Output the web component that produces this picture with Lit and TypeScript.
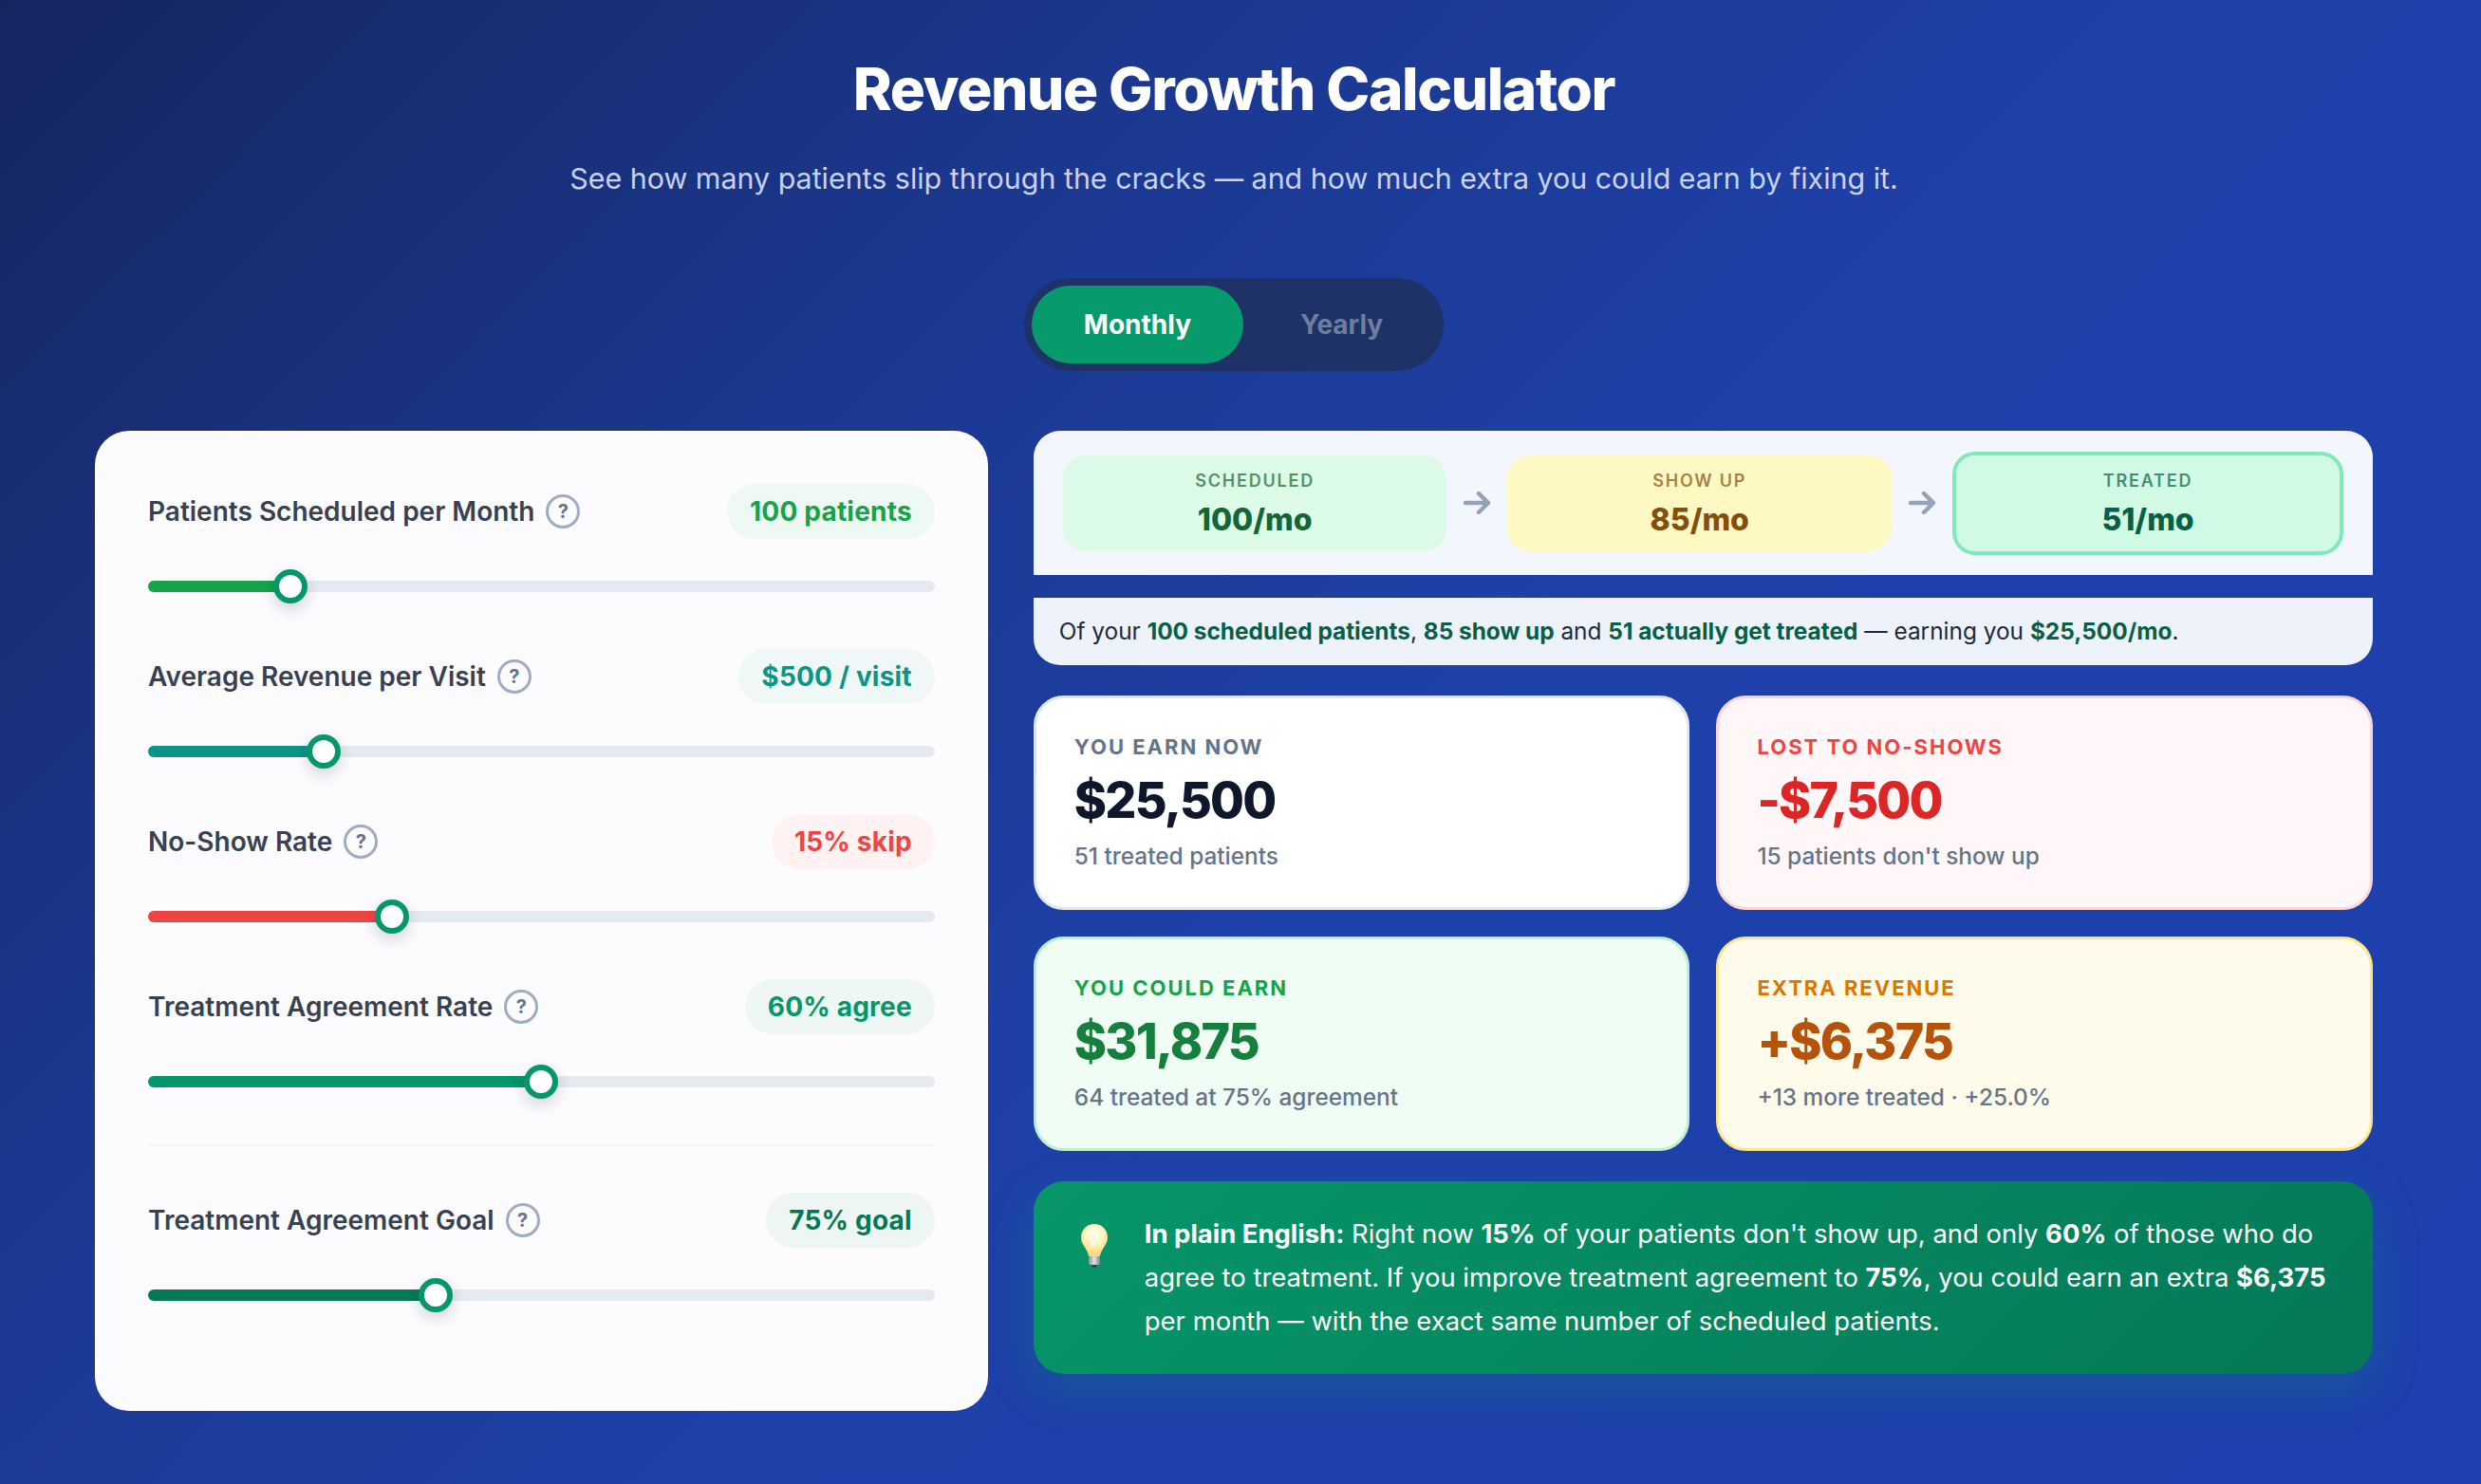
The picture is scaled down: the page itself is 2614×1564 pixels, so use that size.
import { LitElement, css, html } from "lit";
import { customElement } from "lit/decorators.js";

type Slider = {
  label: string;
  value: string;
  thumb: number; // thumb centre as a share of the track
  tone: string;
  divider?: boolean;
};

const SLIDERS: Slider[] = [
  { label: "Patients Scheduled per Month", value: "100 patients", thumb: 18.1, tone: "green" },
  { label: "Average Revenue per Visit", value: "$500 / visit", thumb: 22.3, tone: "teal" },
  { label: "No-Show Rate", value: "15% skip", thumb: 31, tone: "red" },
  { label: "Treatment Agreement Rate", value: "60% agree", thumb: 50, tone: "emerald", divider: true },
  { label: "Treatment Agreement Goal", value: "75% goal", thumb: 36.6, tone: "deep" },
];

@customElement("app-root")
export class AppRoot extends LitElement {
  static styles = css`
    :host {
      display: block;
      min-height: 1564px;
      box-sizing: border-box;
      padding: 0 114px 0 100px;
      background: linear-gradient(135deg, #162560 0%, #1b388e 30%, #1e40a9 55%, #1e40af 100%);
      font-family: Inter, "Liberation Sans", sans-serif;
    }
    .header {
      padding-top: 56px;
      text-align: center;
    }
    h1 {
      margin: 0;
      font-size: 62px;
      line-height: 76px;
      font-weight: 800;
      letter-spacing: -1.4px;
      color: #fff;
    }
    .subtitle {
      margin: 37px 0 0;
      font-size: 30.4px;
      line-height: 38px;
      color: #c7d2ee;
    }
    .toggle-wrap {
      display: flex;
      justify-content: center;
      margin-top: 86px;
    }
    .toggle {
      display: flex;
      gap: 4px;
      padding: 8px;
      border-radius: 49px;
      background: #1e3268;
    }
    .toggle span {
      padding: 0 56px;
      font-size: 28px;
      line-height: 82px;
      font-weight: 700;
      border-radius: 41px;
      color: #6f7e9c;
    }
    .toggle .on {
      padding: 0 55px;
      background: #079a6c;
      color: #fff;
    }
    .grid {
      display: grid;
      grid-template-columns: 2fr 3fr;
      gap: 48px;
      align-items: start;
      margin-top: 63px;
    }

    .controls {
      padding: 56px 56px 56px;
      border-radius: 36px;
      background: #fcfcff;
    }
    .row {
      margin-bottom: 60px;
    }
    .row-head {
      display: flex;
      align-items: center;
      justify-content: space-between;
    }
    .label {
      display: flex;
      align-items: center;
      gap: 12px;
      font-size: 28px;
      font-weight: 600;
      color: #374151;
    }
    .help {
      display: flex;
      align-items: center;
      justify-content: center;
      box-sizing: border-box;
      width: 36px;
      height: 36px;
      border: 3px solid #a0abc4;
      border-radius: 50%;
      font-size: 20px;
      font-weight: 700;
      color: #64748b;
    }
    .pill {
      padding: 0 24px;
      border-radius: 29px;
      font-size: 28px;
      line-height: 58px;
      font-weight: 700;
      letter-spacing: 0.2px;
    }
    .track {
      position: relative;
      height: 12px;
      margin-top: 44px;
      border-radius: 6px;
      background: #e5e9f0;
    }
    .fill {
      height: 100%;
      border-radius: 6px;
    }
    .thumb {
      position: absolute;
      top: 50%;
      box-sizing: border-box;
      width: 36px;
      height: 36px;
      margin: -18px 0 0 -18px;
      border: 6px solid #059669;
      border-radius: 50%;
      background: #fff;
      box-shadow: 0 6px 16px rgba(15, 23, 42, 0.18);
    }
    .divider {
      height: 2px;
      margin-bottom: 49px;
      background: #f1f5f9;
    }
    .green .pill { background: #eff9f3; color: #16a34a; }
    .green .fill { background: #16a34a; }
    .teal .pill { background: #eff8f6; color: #0d9488; }
    .teal .fill { background: #0d9488; }
    .red .pill { background: #fef2f2; color: #ef4444; }
    .red .fill { background: #ef4444; }
    .emerald .pill { background: #eef7f3; color: #059669; }
    .emerald .fill { background: #059669; }
    .deep .pill { background: #edf6f2; color: #047857; }
    .deep .fill { background: #047857; }

    .results {
      display: flex;
      flex-direction: column;
      gap: 32px;
    }
    .funnel {
      display: flex;
      flex-direction: column;
      gap: 24px;
    }
    .flow {
      display: flex;
      align-items: center;
      padding: 21.5px 31px;
      border-radius: 28px 28px 0 0;
      background: #f4f6fe;
    }
    .step {
      flex: 1;
      padding: 13px 8px 0;
      height: 101px;
      box-sizing: border-box;
      border-radius: 24px;
      text-align: center;
    }
    .step .name {
      font-size: 18px;
      line-height: 28px;
      font-weight: 600;
      letter-spacing: 1.8px;
      opacity: 0.7;
    }
    .step .count {
      margin-top: 7px;
      font-size: 32px;
      line-height: 40px;
      font-weight: 800;
    }
    .step.scheduled { background: #dcfce7; color: #166534; }
    .step.show { background: #fef9c3; color: #854d0e; }
    .step.treated {
      flex: none;
      width: 412px;
      height: 109px;
      padding-top: 13px;
      border: 4px solid #80e8bb;
      background: #d1fae5;
      color: #065f46;
    }
    .arrow {
      flex: none;
      display: block;
      width: 64px;
      height: 24px;
    }
    .caption {
      padding: 20px 27px;
      border-radius: 0 0 28px 28px;
      background: #eef2fb;
      font-size: 24.4px;
      line-height: 31px;
      color: #1e293b;
    }
    .caption strong {
      font-weight: 700;
      color: #065f46;
    }

    .cards {
      display: grid;
      grid-template-columns: 1fr 1fr;
      gap: 28px;
    }
    .card {
      box-sizing: border-box;
      height: 226px;
      padding: 37px 40px 0;
      border: 3px solid #e2e8f0;
      border-radius: 32px;
      background: #fff;
    }
    .card .title {
      font-size: 22px;
      line-height: 28px;
      font-weight: 700;
      letter-spacing: 2px;
      color: #64748b;
    }
    .card .amount {
      margin-top: 11px;
      font-size: 52px;
      line-height: 64px;
      font-weight: 800;
      letter-spacing: -1.8px;
      color: #0f172a;
    }
    .card .note {
      margin-top: 11px;
      font-size: 24.4px;
      line-height: 30px;
      font-weight: 500;
      color: #64748b;
    }
    .card.lost { border-color: #fcd5da; background: #fff7f7; }
    .card.lost .title { color: #ef4444; }
    .card.lost .amount { color: #dc2626; }
    .card.could { border-color: #bbf0d2; background: #f0fdf4; }
    .card.could .title { color: #16a34a; }
    .card.could .amount { color: #15803d; }
    .card.extra { border-color: #fde68a; background: #fffbeb; }
    .card.extra .title { color: #d97706; }
    .card.extra .amount { color: #b45309; }

    .insight {
      display: flex;
      align-items: flex-start;
      gap: 39px;
      padding: 32px 30px 33px 50px;
      border-radius: 32px;
      background: linear-gradient(135deg, #079669 0%, #047857 100%);
      box-shadow: 0 16px 48px rgba(5, 150, 105, 0.3);
      font-size: 27.45px;
      line-height: 46px;
      font-weight: 400;
      color: #fff;
    }
    .insight strong {
      font-weight: 700;
    }
    .bulb {
      flex: none;
      width: 28px;
      height: 46px;
      margin-top: 13px;
    }
  `;

  private renderSlider(s: Slider) {
    return html`
      <div class="row ${s.tone}">
        <div class="row-head">
          <div class="label">${s.label}<span class="help">?</span></div>
          <div class="pill">${s.value}</div>
        </div>
        <div class="track">
          <div class="fill" style="width:${s.thumb}%"></div>
          <div class="thumb" style="left:${s.thumb}%"></div>
        </div>
      </div>
      ${s.divider ? html`<div class="divider"></div>` : ""}
    `;
  }

  private renderArrow() {
    return html`<svg class="arrow" viewBox="0 0 64 24" fill="none" stroke="#94a3b8" stroke-width="4.5" stroke-linecap="round" stroke-linejoin="round">
      <path d="M20 12H44M34 2L44 12L34 22" />
    </svg>`;
  }

  private renderBulb() {
    return html`<svg class="bulb" viewBox="0 0 28 46">
      <defs>
        <radialGradient id="glass" cx="50%" cy="32%" r="62%">
          <stop offset="0" stop-color="#fffdf2" />
          <stop offset="0.5" stop-color="#fff6c9" />
          <stop offset="1" stop-color="#f6d97a" />
        </radialGradient>
        <linearGradient id="base" x1="0" x2="1" y1="0" y2="0">
          <stop offset="0" stop-color="#8d939a" />
          <stop offset="0.5" stop-color="#dfe3e6" />
          <stop offset="1" stop-color="#7f858c" />
        </linearGradient>
      </defs>
      <path fill="url(#glass)" d="M14 0C6 0 0 6.200 0 14C0 20.500 4.200 24 6.500 29C7.600 31.400 8 33 8 34H20C20 33 20.400 31.400 21.500 29C23.800 24 28 20.500 28 14C28 6.200 22 0 14 0Z" />
      <rect fill="url(#base)" x="8" y="34" width="12" height="9" rx="2" />
      <path fill="#3c4147" d="M11 43H17L15.500 46H12.500Z" />
    </svg>`;
  }

  override render() {
    return html`
      <div class="header">
        <h1>Revenue Growth Calculator</h1>
        <p class="subtitle">See how many patients slip through the cracks — and how much extra you could earn by fixing it.</p>
      </div>
      <div class="toggle-wrap">
        <div class="toggle"><span class="on">Monthly</span><span>Yearly</span></div>
      </div>
      <div class="grid">
        <section class="controls">${SLIDERS.map((s) => this.renderSlider(s))}</section>
        <section class="results">
          <div class="funnel">
            <div class="flow">
              <div class="step scheduled"><div class="name">SCHEDULED</div><div class="count">100/mo</div></div>
              ${this.renderArrow()}
              <div class="step show"><div class="name">SHOW UP</div><div class="count">85/mo</div></div>
              ${this.renderArrow()}
              <div class="step treated"><div class="name">TREATED</div><div class="count">51/mo</div></div>
            </div>
            <div class="caption">
              Of your <strong>100 scheduled patients</strong>, <strong>85 show up</strong> and
              <strong>51 actually get treated</strong> — earning you <strong>$25,500/mo</strong>.
            </div>
          </div>
          <div class="cards">
            <div class="card">
              <div class="title">YOU EARN NOW</div>
              <div class="amount">$25,500</div>
              <div class="note">51 treated patients</div>
            </div>
            <div class="card lost">
              <div class="title">LOST TO NO-SHOWS</div>
              <div class="amount">-$7,500</div>
              <div class="note">15 patients don't show up</div>
            </div>
            <div class="card could">
              <div class="title">YOU COULD EARN</div>
              <div class="amount">$31,875</div>
              <div class="note">64 treated at 75% agreement</div>
            </div>
            <div class="card extra">
              <div class="title">EXTRA REVENUE</div>
              <div class="amount">+$6,375</div>
              <div class="note">+13 more treated · +25.0%</div>
            </div>
          </div>
          <div class="insight">
            ${this.renderBulb()}
            <div>
              <strong>In plain English:</strong> Right now <strong>15%</strong> of your patients don't show up, and only
              <strong>60%</strong> of those who do<br />agree to treatment. If you improve treatment agreement to
              <strong>75%</strong>, you could earn an extra <strong>$6,375</strong><br />per month — with the exact same number
              of scheduled patients.
            </div>
          </div>
        </section>
      </div>
    `;
  }
}
